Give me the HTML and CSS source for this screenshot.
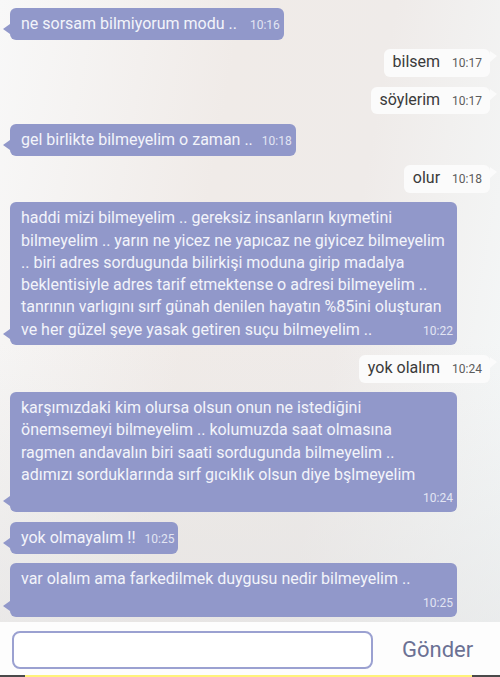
FILE: index.html
```html
<!DOCTYPE html>
<html lang="tr">
<head>
<meta charset="utf-8">
<title>Sohbet</title>
<link rel="stylesheet" href="styles.css">
</head>
<body>
<div class="app">
  <div class="chat">
    <div class="row in">
      <div class="bubble in"><span class="txt">ne sorsam bilmiyorum modu ..</span><span class="time wide-gap">10:16</span></div>
    </div>
    <div class="row out">
      <div class="bubble out"><span class="txt">bilsem</span><span class="time">10:17</span></div>
    </div>
    <div class="row out">
      <div class="bubble out"><span class="txt">söylerim</span><span class="time">10:17</span></div>
    </div>
    <div class="row in">
      <div class="bubble in"><span class="txt">gel birlikte bilmeyelim o zaman ..</span><span class="time">10:18</span></div>
    </div>
    <div class="row out">
      <div class="bubble out"><span class="txt">olur</span><span class="time">10:18</span></div>
    </div>
    <div class="row in">
      <div class="bubble in wide">
        <div class="line">haddi mizi bilmeyelim .. gereksiz insanların kıymetini</div>
        <div class="line">bilmeyelim .. yarın ne yicez ne yapıcaz ne giyicez bilmeyelim</div>
        <div class="line">.. biri adres sordugunda bilirkişi moduna girip madalya</div>
        <div class="line">beklentisiyle adres tarif etmektense o adresi bilmeyelim ..</div>
        <div class="line">tanrının varlıgını sırf günah denilen hayatın %85ini oluşturan</div>
        <div class="line last"><span>ve her güzel şeye yasak getiren suçu bilmeyelim ..</span><span class="time">10:22</span></div>
      </div>
    </div>
    <div class="row out">
      <div class="bubble out"><span class="txt">yok olalım</span><span class="time">10:24</span></div>
    </div>
    <div class="row in">
      <div class="bubble in wide">
        <div class="line">karşımızdaki kim olursa olsun onun ne istediğini</div>
        <div class="line">önemsemeyi bilmeyelim .. kolumuzda saat olmasına</div>
        <div class="line">ragmen andavalın biri saati sordugunda bilmeyelim ..</div>
        <div class="line">adımızı sorduklarında sırf gıcıklık olsun diye bşlmeyelim</div>
        <div class="time-line"><span class="time">10:24</span></div>
      </div>
    </div>
    <div class="row in">
      <div class="bubble in"><span class="txt">yok olmayalım !!</span><span class="time">10:25</span></div>
    </div>
    <div class="row in">
      <div class="bubble in wide">
        <div class="line">var olalım ama farkedilmek duygusu nedir bilmeyelim ..</div>
        <div class="time-line"><span class="time">10:25</span></div>
      </div>
    </div>
  </div>
  <div class="composer">
    <div class="input-box"></div>
    <div class="send">Gönder</div>
  </div>
  <div class="strip"><div class="strip-yellow"></div></div>
</div>
</body>
</html>
```

FILE: styles.css
```css
* { box-sizing: border-box; }

html, body {
  margin: 0;
  padding: 0;
}

body {
  font-family: Roboto, "Noto Sans", "Liberation Sans", sans-serif;
  font-size: 16px;
}

.app {
  width: 500px;
  height: 677px;
  display: flex;
  flex-direction: column;
  overflow: hidden;
}

.chat {
  flex: 1;
  display: flex;
  flex-direction: column;
  gap: 9.6px;
  padding-top: 8px;
  background:
    linear-gradient(180deg, rgba(255,255,255,0) 0%, rgba(255,255,255,0) 55%, rgba(225,225,225,0.55) 100%),
    linear-gradient(100deg, #f8f8f8 0%, #f0ebe8 40%, #efebe9 65%, #f5f9fa 100%);
}

.row {
  display: flex;
}

.row.in {
  justify-content: flex-start;
  padding-left: 10px;
}

.row.out {
  justify-content: flex-end;
  padding-right: 10px;
}

.bubble {
  position: relative;
  display: inline-flex;
  align-items: baseline;
  line-height: 22.2px;
  border-radius: 6px;
  white-space: nowrap;
}

.bubble.in {
  background: #9198ca;
  color: #f3f4fa;
  padding: 5px 4px 3.5px 11px;
}

.bubble.in::before {
  content: "";
  position: absolute;
  left: -7px;
  bottom: 6px;
  border-right: 7px solid #9198ca;
  border-top: 5px solid transparent;
  border-bottom: 5px solid transparent;
}

.bubble.out {
  background: #fbfbfb;
  color: #3a3a3a;
  padding: 2px 8px 2.5px 9px;
}

.bubble.out::after {
  content: "";
  position: absolute;
  right: -7px;
  top: 2px;
  border-left: 7px solid #fbfbfb;
  border-top: 5px solid transparent;
  border-bottom: 6px solid transparent;
}

.time {
  font-size: 12px;
  margin-left: 9px;
}

.bubble.in .time {
  color: #e2e5f3;
}

.bubble.out .time {
  color: #5c5c5c;
  margin-left: 12px;
}

.time.wide-gap {
  margin-left: 13px;
}

.bubble.wide {
  display: block;
  width: 447px;
}

.line {
  white-space: nowrap;
}

.line.last {
  display: flex;
  justify-content: space-between;
  align-items: baseline;
}

.time-line {
  text-align: right;
  line-height: 22px;
}

.composer {
  height: 53px;
  background: #fdfdfd;
  display: flex;
  align-items: center;
  padding-left: 12px;
}

.input-box {
  width: 361px;
  height: 38px;
  border: 2px solid #9ba1d1;
  border-radius: 8px;
  background: #ffffff;
  margin-top: 3px;
}

.send {
  margin-left: 29px;
  font-size: 22px;
  color: #6b7194;
  margin-top: 2px;
}

.strip {
  height: 2px;
  background: #4a4a4a;
  padding-left: 25px;
}

.strip-yellow {
  width: 447px;
  height: 2px;
  background: #fff27a;
}
```
